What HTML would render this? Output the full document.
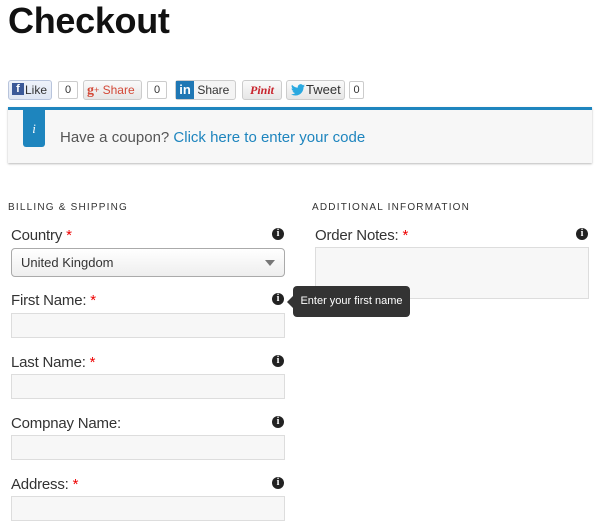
<!DOCTYPE html>
<html><head><style>
*{box-sizing:border-box;margin:0;padding:0}
body{width:600px;height:530px;background:#fff;font-family:"Liberation Sans",Arial,sans-serif;position:relative;overflow:hidden;color:#333}
.a{position:absolute}
h1{position:absolute;left:8px;top:0;font-size:36px;font-weight:bold;color:#111;letter-spacing:-0.3px}
.btn{position:absolute;top:80px;height:20px;border:1px solid #ccc;border-radius:3px;background:linear-gradient(#fafafa,#e6e6e6);font-size:12px;line-height:18px;color:#333}
.cnt{position:absolute;top:81px;height:18px;border:1px solid #ccc;border-radius:2px;background:#fff;font-size:11px;line-height:16px;text-align:center}
.lab{position:absolute;font-size:15px;color:#333;letter-spacing:-0.2px}
.lab b{color:#e00;font-weight:normal}
.inp{position:absolute;left:11px;width:274px;height:25px;border:1px solid #ddd;background:#f7f7f7}
.ic{position:absolute;width:12px;height:12px;border-radius:50%;background:#222;color:#fff;font-size:10px;font-weight:bold;line-height:12px;text-align:center;font-family:"Liberation Serif",serif}
.hd{position:absolute;top:202px;font-size:10px;letter-spacing:1.2px;color:#333}
</style></head><body>
<h1>Checkout</h1>
<div class="btn" style="left:8px;width:44px;background:linear-gradient(#eef2fa,#dfe6f3);border-color:#b8c4dc"><span style="display:inline-block;width:12px;height:12px;background:#3b5998;color:#fff;font-weight:bold;font-size:11px;line-height:13px;text-align:center;margin:2px 1px 0 3px;vertical-align:top">f</span>Like</div>
<div class="cnt" style="left:58px;width:20px">0</div>
<div class="btn" style="left:83px;width:59px;color:#d34836"><span style="font-family:'Liberation Serif',serif;font-weight:bold;margin-left:3px;font-size:14px">g</span><span style="font-size:9px;vertical-align:top">+</span> Share</div>
<div class="cnt" style="left:147px;width:20px">0</div>
<div class="btn" style="left:175px;width:61px;background:#f4f4f4"><span style="display:inline-block;width:18px;height:18px;background:#1f77b4;color:#fff;font-weight:bold;font-size:13px;line-height:18px;text-align:center;vertical-align:top">in</span> Share</div>
<div class="btn" style="left:242px;width:40px;color:#c8232c;font-family:'Liberation Serif',serif;font-style:italic;font-weight:bold;text-align:center">Pinit</div>
<div class="btn" style="left:286px;width:59px"><svg width="14" height="12" viewBox="0 0 24 20" style="margin:3px 1px 0 4px;vertical-align:top"><path d="M24 2.4a10 10 0 0 1-2.8.8A5 5 0 0 0 23.3.5a10 10 0 0 1-3.1 1.2A4.9 4.9 0 0 0 11.8 6 14 14 0 0 1 1.7.9a4.9 4.9 0 0 0 1.5 6.6A4.9 4.9 0 0 1 1 6.9a4.9 4.9 0 0 0 3.9 4.8 5 5 0 0 1-2.2.1 4.9 4.9 0 0 0 4.6 3.4A9.9 9.9 0 0 1 0 17.3 14 14 0 0 0 7.5 19.5c9.1 0 14-7.5 14-14v-.6A10 10 0 0 0 24 2.4z" fill="#2aa9e0"/></svg><span style="color:#333;font-size:13px">Tweet</span></div>
<div class="cnt" style="left:349px;width:15px">0</div>
<div class="a" style="left:8px;top:107px;width:584px;height:56px;background:#f7f7f7;border-top:3px solid #1e85be;box-shadow:0 1px 2px #bbb"></div>
<div class="a" style="left:23px;top:110px;width:22px;height:37px;background:#1e85be;border-radius:0 0 3px 3px;color:#fff;font-family:'Liberation Serif',serif;font-style:italic;font-size:13px;text-align:center;line-height:37px">i</div>
<div class="a" style="left:60px;top:129px;font-size:15px;color:#555">Have a coupon? <span style="color:#1e85be">Click here to enter your code</span></div>
<div class="hd" style="left:8px">BILLING &amp; SHIPPING</div>
<div class="hd" style="left:312px">ADDITIONAL INFORMATION</div>
<div class="lab" style="left:11px;top:227px">Country <b>*</b></div><div class="ic" style="left:272px;top:228px">i</div>
<div class="a" style="left:11px;top:248px;width:274px;height:29px;border:1px solid #aaa;border-radius:4px;background:linear-gradient(#fff,#eee);font-size:13px;line-height:27px;padding-left:9px;color:#333">United Kingdom<span style="position:absolute;right:9px;top:11px;border:5px solid transparent;border-top:6px solid #777;border-bottom:0"></span></div>
<div class="lab" style="left:11px;top:292px">First Name: <b>*</b></div><div class="ic" style="left:272px;top:293px">i</div>
<div class="inp" style="top:313px"></div>
<div class="lab" style="left:11px;top:354px">Last Name: <b>*</b></div><div class="ic" style="left:272px;top:355px">i</div>
<div class="inp" style="top:374px"></div>
<div class="lab" style="left:11px;top:415px">Compnay Name:</div><div class="ic" style="left:272px;top:416px">i</div>
<div class="inp" style="top:435px"></div>
<div class="lab" style="left:11px;top:476px">Address: <b>*</b></div><div class="ic" style="left:272px;top:477px">i</div>
<div class="inp" style="top:496px"></div>
<div class="lab" style="left:315px;top:227px">Order Notes: <b>*</b></div><div class="ic" style="left:576px;top:228px">i</div>
<div class="a" style="left:315px;top:247px;width:274px;height:52px;border:1px solid #ddd;background:#f7f7f7"></div>
<div class="a" style="left:293px;top:286px;width:117px;height:31px;background:#333;border-radius:4px;color:#fff;font-size:11px;line-height:31px;text-align:center;z-index:5">Enter your first name</div>
<div class="a" style="left:287px;top:296px;border:6px solid transparent;border-right:6px solid #333;border-left:0;z-index:5"></div>
</body></html>
